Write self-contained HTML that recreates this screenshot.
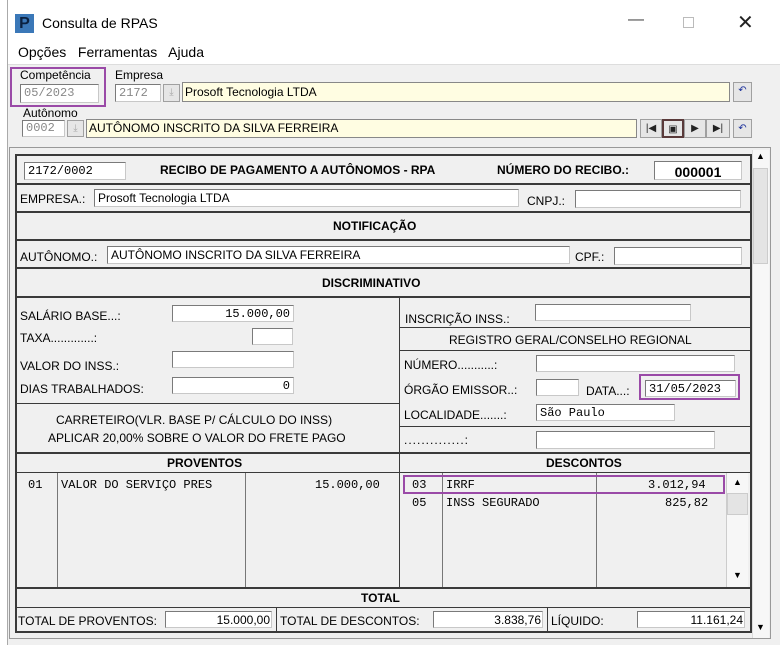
<!DOCTYPE html>
<html><head><meta charset="utf-8"><style>
*{box-sizing:border-box;margin:0;padding:0}
body{width:780px;height:645px;background:#fff;font-family:"Liberation Sans",sans-serif;font-size:12px;color:#000;position:relative;overflow:hidden}
.a{position:absolute}
.in{position:absolute;background:#fff;border:1px solid #7a7a7a;border-right-color:#c8c8c8;border-bottom-color:#c8c8c8;font-family:"Liberation Mono",monospace;font-size:12px;line-height:16px;padding:0 3px;white-space:nowrap;overflow:hidden}
.hl{position:absolute;height:2px;background:#3a3a3a}
.vl{position:absolute;width:1px;background:#3a3a3a}
.b{font-weight:bold}
.btn{position:absolute;background:#e6e6e6;border:1px solid #a0a0a0;font-size:10px;text-align:center;line-height:16px;color:#1a2f9a}
.t{position:absolute;white-space:nowrap}
</style></head><body>
<!-- window -->
<div class="a" style="left:7px;top:0;width:773px;height:645px;background:#f0f0f0;border-left:1px solid #aaa"></div>
<div class="a" style="left:8px;top:0;width:772px;height:64px;background:#fff"></div>
<div class="a" style="left:15px;top:14px;width:19px;height:19px;background:#3b78b8;color:#0b2140;font-weight:bold;font-size:16px;line-height:19px;text-align:center">P</div>
<div class="t" style="left:42px;top:15px;font-size:14px">Consulta de RPAS</div>
<div class="t" style="left:628px;top:11px;font-size:16px;color:#444">—</div>
<div class="a" style="left:683px;top:17px;width:11px;height:11px;border:1px solid #bbb"></div>
<div class="t" style="left:737px;top:10px;font-size:20px;color:#222">✕</div>
<div class="t" style="left:18px;top:44px;font-size:14px">Opções&nbsp;&nbsp; Ferramentas&nbsp;&nbsp; Ajuda</div>
<div class="a" style="left:8px;top:64px;width:772px;height:1px;background:#ddd"></div>

<!-- header fields -->
<div class="t" style="left:20px;top:68px">Competência</div>
<div class="in" style="left:20px;top:84px;width:79px;height:19px;color:#888">05/2023</div>
<div class="a" style="left:10px;top:67px;width:96px;height:40px;border:2px solid #9a4aa7"></div>
<div class="t" style="left:115px;top:68px">Empresa</div>
<div class="in" style="left:115px;top:84px;width:46px;height:18px;color:#888">2172</div>
<div class="btn" style="left:163px;top:84px;width:17px;height:18px;color:#aaa">⤓</div>
<div class="a" style="left:182px;top:82px;width:548px;height:20px;background:#fffde2;border:1px solid #888;padding-left:2px;line-height:18px">Prosoft Tecnologia LTDA</div>
<div class="btn" style="left:733px;top:82px;width:19px;height:20px">↶</div>
<div class="t" style="left:23px;top:106px">Autônomo</div>
<div class="in" style="left:22px;top:120px;width:43px;height:17px;color:#888;line-height:15px">0002</div>
<div class="btn" style="left:67px;top:120px;width:17px;height:17px;color:#aaa;line-height:15px">⤓</div>
<div class="a" style="left:86px;top:119px;width:551px;height:19px;background:#fffde2;border:1px solid #888;padding-left:2px;line-height:17px">AUTÔNOMO INSCRITO DA SILVA FERREIRA</div>
<div class="btn" style="left:640px;top:119px;width:22px;height:19px;color:#222;line-height:17px">|◀</div>
<div class="btn" style="left:662px;top:119px;width:22px;height:19px;color:#222;line-height:17px;border:2px solid #5a3a3a">▣</div>
<div class="btn" style="left:684px;top:119px;width:22px;height:19px;color:#222;line-height:17px">▶</div>
<div class="btn" style="left:706px;top:119px;width:24px;height:19px;color:#222;line-height:17px">▶|</div>
<div class="btn" style="left:733px;top:119px;width:19px;height:19px;line-height:17px">↶</div>

<!-- form container -->
<div class="a" style="left:9px;top:147px;width:762px;height:492px;border:1px solid #999;background:#f0f0f0"></div>
<div class="a" style="left:15px;top:154px;width:737px;height:479px;border:2px solid #3a3a3a"></div>
<!-- scrollbar -->
<div class="a" style="left:752px;top:150px;width:17px;height:488px;background:#f7f7f7;border-left:1px solid #ddd"></div>
<div class="t" style="left:756px;top:151px;font-size:9px">▲</div>
<div class="a" style="left:753px;top:168px;width:15px;height:96px;background:#e4e4e4;border:1px solid #ccc"></div>
<div class="t" style="left:756px;top:622px;font-size:9px">▼</div>

<!-- row 1 -->
<div class="in" style="left:24px;top:162px;width:102px;height:18px">2172/0002</div>
<div class="t b" style="left:160px;top:163px">RECIBO DE PAGAMENTO A AUTÔNOMOS - RPA</div>
<div class="t b" style="left:497px;top:163px">NÚMERO DO RECIBO.:</div>
<div class="in" style="left:654px;top:161px;width:88px;height:19px;font-family:'Liberation Sans',sans-serif;font-weight:bold;font-size:14px;text-align:center;line-height:20px">000001</div>
<div class="hl" style="left:16px;top:183px;width:735px"></div>
<!-- empresa -->
<div class="t" style="left:20px;top:192px">EMPRESA.:</div>
<div class="in" style="left:94px;top:189px;width:425px;height:18px;font-family:'Liberation Sans',sans-serif">Prosoft Tecnologia LTDA</div>
<div class="t" style="left:527px;top:194px">CNPJ.:</div>
<div class="in" style="left:575px;top:190px;width:166px;height:18px"></div>
<div class="hl" style="left:16px;top:211px;width:735px"></div>
<div class="t b" style="left:333px;top:219px">NOTIFICAÇÃO</div>
<div class="hl" style="left:16px;top:239px;width:735px"></div>
<div class="t" style="left:20px;top:250px">AUTÔNOMO.:</div>
<div class="in" style="left:107px;top:246px;width:463px;height:18px;font-family:'Liberation Sans',sans-serif">AUTÔNOMO INSCRITO DA SILVA FERREIRA</div>
<div class="t" style="left:575px;top:250px">CPF.:</div>
<div class="in" style="left:614px;top:247px;width:128px;height:18px"></div>
<div class="hl" style="left:16px;top:267px;width:735px"></div>
<div class="t b" style="left:322px;top:276px">DISCRIMINATIVO</div>
<div class="hl" style="left:16px;top:296px;width:735px"></div>
<div class="vl" style="left:399px;top:297px;height:292px"></div>

<!-- left section -->
<div class="t" style="left:20px;top:309px">SALÁRIO BASE...:</div>
<div class="in" style="left:172px;top:305px;width:122px;height:17px;text-align:right">15.000,00</div>
<div class="t" style="left:20px;top:331px">TAXA.............:</div>
<div class="in" style="left:252px;top:328px;width:41px;height:17px"></div>
<div class="t" style="left:20px;top:359px">VALOR DO INSS.:</div>
<div class="in" style="left:172px;top:351px;width:122px;height:17px"></div>
<div class="t" style="left:20px;top:382px">DIAS TRABALHADOS:</div>
<div class="in" style="left:172px;top:377px;width:122px;height:17px;text-align:right">0</div>
<div class="hl" style="left:16px;top:403px;width:383px;height:1px"></div>
<div class="t" style="left:56px;top:413px">CARRETEIRO(VLR. BASE P/ CÁLCULO DO INSS)</div>
<div class="t" style="left:48px;top:431px">APLICAR 20,00% SOBRE O VALOR DO FRETE PAGO</div>

<!-- right section -->
<div class="t" style="left:405px;top:312px">INSCRIÇÃO INSS.:</div>
<div class="in" style="left:535px;top:304px;width:156px;height:17px"></div>
<div class="hl" style="left:400px;top:327px;width:351px;height:1px"></div>
<div class="t" style="left:449px;top:333px">REGISTRO GERAL/CONSELHO REGIONAL</div>
<div class="hl" style="left:400px;top:350px;width:351px;height:1px"></div>
<div class="t" style="left:404px;top:358px">NÚMERO...........:</div>
<div class="in" style="left:536px;top:355px;width:199px;height:17px"></div>
<div class="t" style="left:404px;top:383px">ÓRGÃO EMISSOR..:</div>
<div class="in" style="left:536px;top:379px;width:43px;height:17px"></div>
<div class="t" style="left:586px;top:384px">DATA...:</div>
<div class="in" style="left:645px;top:380px;width:91px;height:17px">31/05/2023</div>
<div class="a" style="left:639px;top:374px;width:101px;height:26px;border:2px solid #9a4aa7"></div>
<div class="t" style="left:404px;top:408px">LOCALIDADE.......:</div>
<div class="in" style="left:536px;top:404px;width:139px;height:17px">São Paulo</div>
<div class="hl" style="left:400px;top:426px;width:351px;height:1px"></div>
<div class="t" style="left:404px;top:433px;letter-spacing:1px">..............:</div>
<div class="in" style="left:536px;top:431px;width:179px;height:18px"></div>
<div class="hl" style="left:16px;top:452px;width:735px"></div>

<!-- proventos/descontos -->
<div class="t b" style="left:167px;top:456px">PROVENTOS</div>
<div class="t b" style="left:546px;top:456px">DESCONTOS</div>
<div class="hl" style="left:16px;top:472px;width:735px;height:1px"></div>
<div class="vl" style="left:57px;top:473px;height:115px;background:#777"></div>
<div class="vl" style="left:245px;top:473px;height:115px;background:#777"></div>
<div class="vl" style="left:442px;top:473px;height:115px;background:#777"></div>
<div class="vl" style="left:596px;top:473px;height:115px;background:#777"></div>
<div class="t" style="left:28px;top:478px;font-family:'Liberation Mono',monospace">01</div>
<div class="t" style="left:61px;top:478px;font-family:'Liberation Mono',monospace">VALOR DO SERVIÇO PRES</div>
<div class="t" style="left:315px;top:478px;font-family:'Liberation Mono',monospace">15.000,00</div>
<div class="t" style="left:412px;top:478px;font-family:'Liberation Mono',monospace">03</div>
<div class="t" style="left:446px;top:478px;font-family:'Liberation Mono',monospace">IRRF</div>
<div class="t" style="left:648px;top:478px;font-family:'Liberation Mono',monospace">3.012,94</div>
<div class="a" style="left:403px;top:475px;width:322px;height:19px;border:2px solid #9a4aa7"></div>
<div class="t" style="left:412px;top:496px;font-family:'Liberation Mono',monospace">05</div>
<div class="t" style="left:446px;top:496px;font-family:'Liberation Mono',monospace">INSS SEGURADO</div>
<div class="t" style="left:665px;top:496px;font-family:'Liberation Mono',monospace">825,82</div>
<div class="a" style="left:726px;top:473px;width:22px;height:114px;background:#f7f7f7;border-left:1px solid #ccc"></div>
<div class="t" style="left:733px;top:477px;font-size:9px">▲</div>
<div class="a" style="left:727px;top:493px;width:21px;height:22px;background:#e4e4e4;border:1px solid #ccc"></div>
<div class="t" style="left:733px;top:570px;font-size:9px">▼</div>
<div class="hl" style="left:16px;top:587px;width:735px"></div>
<div class="t b" style="left:361px;top:591px">TOTAL</div>
<div class="hl" style="left:16px;top:607px;width:735px;height:1px"></div>

<!-- totals -->
<div class="t" style="left:18px;top:614px">TOTAL DE PROVENTOS:</div>
<div class="in" style="left:165px;top:611px;width:107px;height:17px;font-family:'Liberation Sans',sans-serif;text-align:right;padding-right:1px">15.000,00</div>
<div class="vl" style="left:276px;top:608px;height:24px"></div>
<div class="t" style="left:280px;top:614px">TOTAL DE DESCONTOS:</div>
<div class="in" style="left:433px;top:611px;width:110px;height:17px;font-family:'Liberation Sans',sans-serif;text-align:right;padding-right:1px">3.838,76</div>
<div class="vl" style="left:547px;top:608px;height:24px"></div>
<div class="t" style="left:551px;top:614px">LÍQUIDO:</div>
<div class="in" style="left:637px;top:611px;width:108px;height:17px;font-family:'Liberation Sans',sans-serif;text-align:right;padding-right:1px">11.161,24</div>
</body></html>
